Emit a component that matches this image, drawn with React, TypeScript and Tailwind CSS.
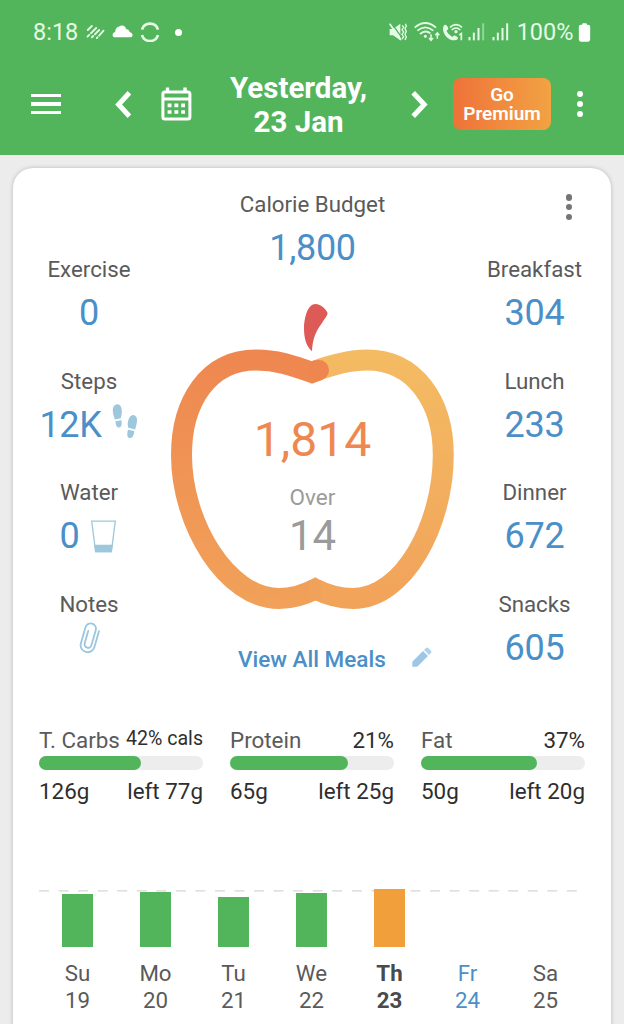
import type { ReactNode } from 'react'

interface StatProps {
  label: string
  value?: string
  icon?: ReactNode
}

interface MacroProps {
  name: string
  share: string
  small?: boolean
  percent: number
  eaten: string
  left: string
}

const MEALS = [
  { label: 'Breakfast', value: '304' },
  { label: 'Lunch', value: '233' },
  { label: 'Dinner', value: '672' },
  { label: 'Snacks', value: '605' },
]

const MACROS: MacroProps[] = [
  { name: 'T. Carbs', share: '42% cals', small: true, percent: 62.2, eaten: '126g', left: 'left 77g' },
  { name: 'Protein', share: '21%', percent: 72.2, eaten: '65g', left: 'left 25g' },
  { name: 'Fat', share: '37%', percent: 71, eaten: '50g', left: 'left 20g' },
]

const DAYS = [
  { day: 'Su', date: 19, height: 53, bar: 'bg-[#52b55c]', text: 'text-[#5a5a5a]' },
  { day: 'Mo', date: 20, height: 55, bar: 'bg-[#52b55c]', text: 'text-[#5a5a5a]' },
  { day: 'Tu', date: 21, height: 50, bar: 'bg-[#52b55c]', text: 'text-[#5a5a5a]' },
  { day: 'We', date: 22, height: 54, bar: 'bg-[#52b55c]', text: 'text-[#5a5a5a]' },
  { day: 'Th', date: 23, height: 58, bar: 'bg-[#f09f3b]', text: 'font-bold text-[#4a4a4a]' },
  { day: 'Fr', date: 24, height: 0, bar: '', text: 'text-[#4a8fc7]' },
  { day: 'Sa', date: 25, height: 0, bar: '', text: 'text-[#5a5a5a]' },
]

function Signal({ faded }: { faded?: boolean }) {
  return (
    <svg viewBox="0 0 50 60" className="h-5 w-[17px]" fill="currentColor">
      <rect x="1" y="45" width="6" height="10" />
      <rect x="14" y="32" width="6" height="23" />
      <rect x="28" y="18" width="6" height="37" />
      <rect x="42" y="4" width="6" height="51" opacity={faded ? 0.45 : 1} />
    </svg>
  )
}

function StatusBar() {
  return (
    <div className="flex h-16 items-center pl-[33px] pr-[33px] text-[#e6fbe6]">
      <span className="w-[53px] text-[23.5px] leading-6">8:18</span>
      <svg viewBox="0 0 56 48" className="h-4 w-[19px]" stroke="currentColor" strokeWidth="5.5" strokeLinecap="round">
        <path d="M5 18 L17 6 M4 38 L9 33 M14 28 L30 12 M17 40 L21 36 M26 31 L39 18 M32 42 L34 40 M39 35 L52 20" />
      </svg>
      <svg viewBox="0 0 62 60" className="ml-[7px] h-5 w-[21px] text-white" fill="currentColor">
        <path d="M10 46 C-2 46 -1 32 9 30 C9 20 15 14 20 14 C28 7 41 11 42 22 C49 21 52 26 52 30 C64 32 64 46 53 46 Z" />
      </svg>
      <svg viewBox="0 0 60 60" className="ml-[7px] size-5" fill="none" stroke="currentColor" strokeWidth="8">
        <path d="M6 23 A25 25 0 0 1 54 23" />
        <path d="M6 39 A25 25 0 0 0 54 39" />
      </svg>
      <span className="ml-[14.5px] size-[7px] rounded-full bg-white" />

      {/* Vibrate, wifi and calls */}
      <svg viewBox="0 0 54 60" className="ml-auto h-5 w-[18px]" fill="currentColor">
        <path d="M2 21 H12 L34 5 V55 L12 40 H2 Z" />
        <path d="M8 4 L38 46" stroke="#52b55c" strokeWidth="4" />
        <path d="M2 5 L36 54" stroke="currentColor" strokeWidth="5" />
        <path d="M40 10 L44 16 L39 23 L44 30 L39 37 L44 44 L39 51 M49 5 L52 12 L48 20 L52 28 L48 37 L52 45 L48 54" fill="none" stroke="currentColor" strokeWidth="4" />
      </svg>
      <svg viewBox="0 0 78 60" className="ml-[7px] h-5 w-[26px]" fill="none" stroke="currentColor" strokeWidth="5.5">
        <path d="M2 17 Q34 -11 66 17 M10 26 Q34 6 58 26 M18 36 Q34 22 49 34" />
        <circle cx="34" cy="43" r="4.5" fill="currentColor" stroke="none" />
        <path d="M51 37 V54 M45 48 L51 55 L57 48 M70 50 V34 M64 40 L70 33 L76 40" strokeWidth="4.5" />
      </svg>
      <svg viewBox="0 0 66 60" className="ml-0.5 h-5 w-[22px]" fill="none" stroke="currentColor" strokeWidth="5">
        <path d="M5 11 C10 5 15 8 19 19 C18 24 14 25 14 28 C18 36 25 41 31 45 C35 41 38 39 43 43 C50 47 49 51 42 54 C22 60 -4 34 5 11 Z" fill="currentColor" stroke="none" />
        <path d="M24 16 Q42 0 60 16 M29 24 Q42 12 55 24" />
        <circle cx="42" cy="29" r="5" fill="currentColor" stroke="none" />
        <path d="M52 39 L58 35 V55" strokeWidth="5" />
      </svg>
      <span className="ml-1 flex gap-[7px]">
        <Signal faded />
        <Signal />
      </span>
      <span className="ml-2 text-[23.5px] leading-6">100%</span>
      <svg viewBox="0 0 36 57" className="ml-[4.5px] h-[19px] w-[13px] text-white" fill="currentColor">
        <path d="M11 4 Q11 1 14 1 H22 Q25 1 25 4 V5 H29 Q35 5 35 11 V49 Q35 56 29 56 H7 Q1 56 1 49 V11 Q1 5 7 5 H11 Z" />
      </svg>
    </div>
  )
}

function Toolbar() {
  return (
    <div className="flex h-20 items-center pl-[31px] text-white">
      <div className="flex w-[30px] flex-col gap-[5px]">
        <span className="h-[3.3px] bg-current" />
        <span className="h-[3.3px] bg-current" />
        <span className="h-[3.3px] bg-current" />
      </div>
      <svg viewBox="0 0 16 27" className="ml-[54px] h-[27px] w-4" fill="none" stroke="currentColor" strokeWidth="5">
        <path d="M14.4 1.8 L3.6 13.5 L14.4 25.2" />
      </svg>
      <svg viewBox="0 0 31 34" className="ml-[30px] h-[34px] w-[31px]" fill="none" stroke="currentColor" strokeWidth="3">
        <rect x="1.9" y="4.9" width="27" height="27" rx="2" />
        <path d="M2 12 H29" />
        <path d="M6.5 0.5 V5 M24 0.5 V5" strokeWidth="3.4" />
        <path d="M6.6 18.4 H24 M6.6 25 H24" strokeWidth="3.6" strokeDasharray="3.9 2.9" />
      </svg>
      <h1 className="ml-7 w-[157px] pt-px text-center text-[29.5px] font-bold leading-[34px]">
        Yesterday,
        <br />
        23 Jan
      </h1>
      <svg viewBox="0 0 17 27" className="ml-[34px] h-[27px] w-[17px]" fill="none" stroke="currentColor" strokeWidth="5">
        <path d="M2.2 1.8 L13.2 13.5 L2.2 25.2" />
      </svg>
      <button className="ml-[25px] h-[52px] w-[98px] rounded-lg bg-linear-to-r from-[#ee7239] to-[#f2a243] text-[19px] font-semibold leading-[19.5px]">
        Go Premium
      </button>
      <div className="ml-[25.5px] flex flex-col gap-[3.5px]">
        <span className="size-[6.5px] rounded-full bg-current" />
        <span className="size-[6.5px] rounded-full bg-current" />
        <span className="size-[6.5px] rounded-full bg-current" />
      </div>
    </div>
  )
}

function Stat({ label, value, icon }: StatProps) {
  return (
    <div className="flex h-[111.7px] flex-col items-center">
      <div className="text-[22.3px] leading-7 text-[#5a5a5a]">{label}</div>
      <div className="mt-1.5 flex h-12 items-center text-[36px] leading-[48px] tracking-[-0.3px] text-[#4a8fc7]">
        {value}
        {icon}
      </div>
    </div>
  )
}

function StepsIcon() {
  return (
    <svg viewBox="0 0 76 106" className="mb-1.5 ml-2.5 mr-px h-[35px] w-[26px]" fill="#9dc7dd">
      <path d="M15 1 C27 1 30 18 28 29 Q27 38 25 43 L7 47 C5 38 1 31 1 20 C1 10 6 1 15 1 Z" />
      <path d="M9 52 L27 49 C29 60 28 69 21 71 C13 73 10 63 9 52 Z" />
      <path d="M62 33 C73 34 76 44 74 55 C73 63 70 70 69 77 L48 72 C46 63 45 57 48 49 C51 40 55 33 62 33 Z" />
      <path d="M47 78 L66 82 C65 94 62 104 52 103 C43 102 44 90 47 78 Z" />
    </svg>
  )
}

function GlassIcon() {
  return (
    <svg viewBox="0 0 76 98" className="ml-3 mr-0.5 h-[33px] w-[25px]" fill="none" stroke="#9dc7dd" strokeWidth="4">
      <path d="M2 2 H74 L62 95 H14 Z" />
      <path d="M10 74 H66 L63 97 H13 Z" fill="#9dc7dd" stroke="none" />
    </svg>
  )
}

function ClipIcon() {
  return (
    <svg viewBox="0 0 66 96" className="mb-5 h-8 w-[22px]" fill="none" stroke="#9dc7dd" strokeWidth="5.5" strokeLinecap="round">
      <path
        transform="rotate(16 33 48)"
        d="M56 20 V70 A21 21 0 0 1 14 70 V20 A16 16 0 0 1 46 20 V67 A10.5 10.5 0 0 1 25 67 V28"
      />
    </svg>
  )
}

function PencilIcon() {
  return (
    <svg viewBox="0 0 60 60" className="mb-[5px] size-5" fill="#9ec7e6">
      <path d="M1 59 V46 C1 44 2 43 3 42 L33 12 L48 27 L18 57 C16 59 15 59 13 59 Z" />
      <path d="M36 9 L42 3 Q46 0 49 3 L57 11 Q60 14 57 18 L51 24 Z" opacity="0.8" />
    </svg>
  )
}

function Apple() {
  return (
    <div className="relative mt-7 h-[312px] w-[295px]">
      <svg viewBox="165 300 295 312" className="h-full w-full" fill="none">
        <defs>
          <linearGradient id="rest" gradientUnits="userSpaceOnUse" x1="340" y1="355" x2="340" y2="605">
            <stop offset="0" stopColor="#f4bb63" />
            <stop offset="1" stopColor="#f1a35a" />
          </linearGradient>
          <linearGradient id="eaten" gradientUnits="userSpaceOnUse" x1="300" y1="355" x2="270" y2="605">
            <stop offset="0" stopColor="#ee8650" />
            <stop offset="1" stopColor="#f1a159" />
          </linearGradient>
        </defs>
        <path
          d="M312 372 C331 365 349 360 367 360 C415 360 443.3 402 443.3 455 C443.3 524 404 598.5 353 598.5 C339 598.5 327 595 315.3 589"
          stroke="url(#rest)"
          strokeWidth="21"
        />
        <path
          d="M318.5 370 L312 372.5 C292 365 276 360 256 360 C208 360 181.5 402 181.5 455 C181.5 524 227 598.5 279 598.5 C293 598.5 304 595 315.3 589"
          stroke="url(#eaten)"
          strokeWidth="21"
        />
        {/* The lobes meet in a point at the base */}
        <path d="M309 580.5 L315.3 577.3 L321 580.5 L321 598 L315.3 600.7 L309 598 Z" fill="#f1a25a" />
        <circle cx="318.5" cy="370.2" r="10.5" fill="#ef8650" />
        <path
          d="M312 351.3 C306 346 304 338 304 328 C304.5 316 308 304 315.5 304 C320 304 325 308 327.4 312.5 C328.2 315 325 318 322 323 C316 331 312.5 339 312 351.3 Z"
          fill="#dd5a56"
        />
      </svg>
      <div className="absolute inset-0 flex flex-col items-center pt-[110px]">
        <span className="text-[48px] leading-[60px] text-[#ee8850]">1,814</span>
        <span className="mt-[13px] text-[22.5px] leading-7 text-[#9b9b9b]">Over</span>
        <span className="text-[42px] leading-[49px] text-[#9b9b9b]">14</span>
      </div>
    </div>
  )
}

function Macro({ name, share, small, percent, eaten, left }: MacroProps) {
  return (
    <div className="w-[164px] text-[22.4px] text-[#2e2e2e]">
      <div className="flex h-[30px] justify-between pt-px leading-[30px]">
        <span className="text-[#5a5a5a]">{name}</span>
        <span className={small ? 'text-[19.6px] leading-[27px]' : ''}>{share}</span>
      </div>
      <div className="mt-[2px] h-[14px] rounded-full bg-[#ededed]">
        <div className="h-full rounded-full bg-[#52b55c]" style={{ width: `${percent}%` }} />
      </div>
      <div className="mt-1.5 flex justify-between leading-[30px]">
        <span>{eaten}</span>
        <span>{left}</span>
      </div>
    </div>
  )
}

function Week() {
  return (
    <div className="relative ml-[25.5px] mt-[83px] w-[546px]">
      <svg className="absolute left-0 top-px h-[2px] w-[541px]" stroke="#d6d6d6" strokeWidth="1.3" strokeDasharray="10 9.55">
        <path d="M0 0.8 H541" />
      </svg>
      <div className="relative grid grid-cols-7">
        {DAYS.map((d) => (
          <div key={d.day} className={`flex flex-col items-center text-[22.3px] leading-[26.5px] ${d.text}`}>
            <div className="flex h-[58px] items-end">
              <div className={`w-[31.5px] ${d.bar}`} style={{ height: d.height }} />
            </div>
            <span className="mt-[13px]">{d.day}</span>
            <span>{d.date}</span>
          </div>
        ))}
      </div>
    </div>
  )
}

export default function App() {
  return (
    <div className="h-[1024px] w-[624px] overflow-hidden bg-[#ececec] font-[Roboto,sans-serif]">
      <header className="h-[155px] bg-[#52b55c]">
        <StatusBar />
        <Toolbar />
      </header>

      <main className="relative ml-[13px] mt-[13px] h-[900px] w-[598px] rounded-[20px] bg-white shadow-[0_0_4px_rgba(0,0,0,0.22)]">
        <div className="absolute right-[39px] top-[26px] flex flex-col gap-[3.3px]">
          <span className="size-[6.5px] rounded-full bg-[#757575]" />
          <span className="size-[6.5px] rounded-full bg-[#757575]" />
          <span className="size-[6.5px] rounded-full bg-[#757575]" />
        </div>

        <div className="flex h-[556px]">
          <section className="w-[152px] pt-[87px]">
            <Stat label="Exercise" value="0" />
            <Stat label="Steps" value="12K" icon={<StepsIcon />} />
            <Stat label="Water" value="0" icon={<GlassIcon />} />
            <Stat label="Notes" icon={<ClipIcon />} />
          </section>

          <section className="w-[295px] pt-[22px] text-center">
            <div className="text-[22.3px] leading-7 text-[#5a5a5a]">Calorie Budget</div>
            <div className="mt-1.5 text-[36px] leading-[48px] tracking-[-0.3px] text-[#4a8fc7]">1,800</div>
            <Apple />
            <div className="ml-[73px] mt-8 flex items-center gap-[26px] whitespace-nowrap text-[22.5px] font-medium leading-[31px] text-[#4a8fc7]">
              View All Meals
              <PencilIcon />
            </div>
          </section>

          <section className="w-[149px] pt-[87px]">
            {MEALS.map((m) => (
              <Stat key={m.label} label={m.label} value={m.value} />
            ))}
          </section>
        </div>

        <div className="ml-[26px] flex gap-[27px]">
          {MACROS.map((m) => (
            <Macro key={m.name} {...m} />
          ))}
        </div>

        <Week />
      </main>
    </div>
  )
}
